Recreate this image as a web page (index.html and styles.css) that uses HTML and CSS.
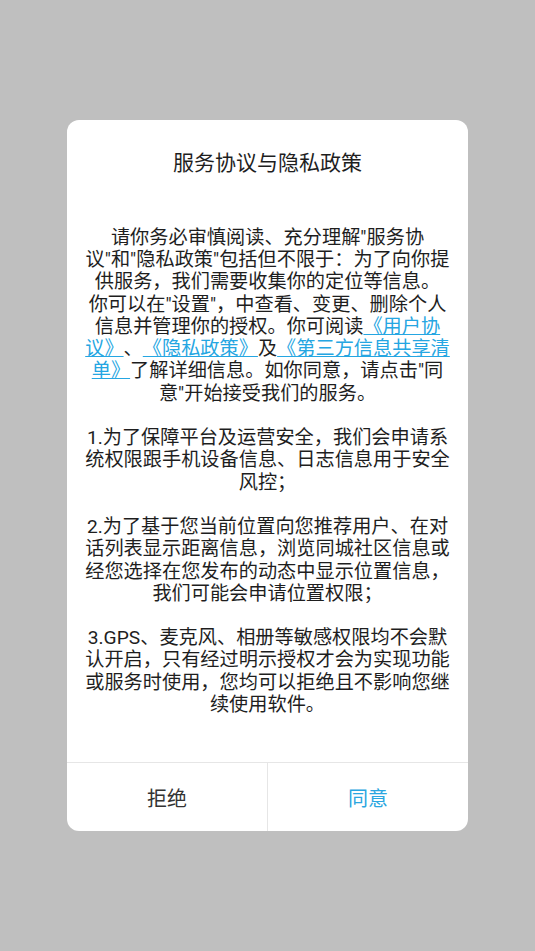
FILE: index.html
```html
<!DOCTYPE html>
<html lang="zh-CN">
<head>
<meta charset="utf-8">
<title>服务协议与隐私政策</title>
<link rel="stylesheet" href="styles.css">
</head>
<body>
<div class="dialog">
  <h1 class="title">服务协议与隐私政策</h1>
  <div class="content">
    <p class="para">请你务必审慎阅读、充分理解"服务协<br>议"和"隐私政策"包括但不限于：为了向你提<br>供服务，我们需要收集你的定位等信息。<br>你可以在"设置"，中查看、变更、删除个人<br>信息并管理你的授权。你可阅读<a class="link" href="#">《用户协<br>议》</a>、<a class="link" href="#">《隐私政策》</a>及<a class="link" href="#">《第三方信息共享清<br>单》</a>了解详细信息。如你同意，请点击"同<br>意"开始接受我们的服务。</p>
    <p class="para">1.为了保障平台及运营安全，我们会申请系<br>统权限跟手机设备信息、日志信息用于安全<br>风控；</p>
    <p class="para">2.为了基于您当前位置向您推荐用户、在对<br>话列表显示距离信息，浏览同城社区信息或<br>经您选择在您发布的动态中显示位置信息，<br>我们可能会申请位置权限；</p>
    <p class="para">3.GPS、麦克风、相册等敏感权限均不会默<br>认开启，只有经过明示授权才会为实现功能<br>或服务时使用，您均可以拒绝且不影响您继<br>续使用软件。</p>
  </div>
  <div class="actions">
    <button class="btn btn-reject" type="button">拒绝</button>
    <button class="btn btn-agree" type="button">同意</button>
  </div>
</div>
</body>
</html>
```
FILE: styles.css
```css
html, body {
  margin: 0;
  padding: 0;
}
body {
  background: #bfbfbf;
  width: 535px;
  height: 951px;
  overflow: hidden;
  font-family: Roboto, "Noto Sans CJK SC", sans-serif;
  color: #1e1e1e;
}
.dialog {
  width: 401px;
  margin: 120px auto 0;
  background: #ffffff;
  border-radius: 12px;
  overflow: hidden;
}
.title {
  margin: 0;
  padding-top: 31px;
  font-size: 21px;
  line-height: 25px;
  font-weight: normal;
  text-align: center;
  color: #1e1e1e;
}
.content {
  padding: 51px 18px 46px;
  text-align: center;
  font-size: 19.2px;
  line-height: 22.24px;
  text-spacing-trim: space-all;
}
.para {
  margin: 0;
  white-space: nowrap;
}
.para + .para {
  margin-top: 22.24px;
}
.link {
  color: #25a6e2;
  text-decoration: underline;
  text-decoration-color: #25a6e2;
}
.actions {
  display: flex;
  border-top: 1px solid #e6e6e6;
  height: 68px;
}
.btn {
  flex: 1;
  margin: 0;
  padding: 0;
  border: 0;
  background: transparent;
  font-family: Roboto, "Noto Sans CJK SC", sans-serif;
  font-size: 20px;
  cursor: pointer;
}
.btn-reject {
  color: #333333;
  border-right: 1px solid #e6e6e6;
}
.btn-agree {
  color: #2aa6e0;
}
```
